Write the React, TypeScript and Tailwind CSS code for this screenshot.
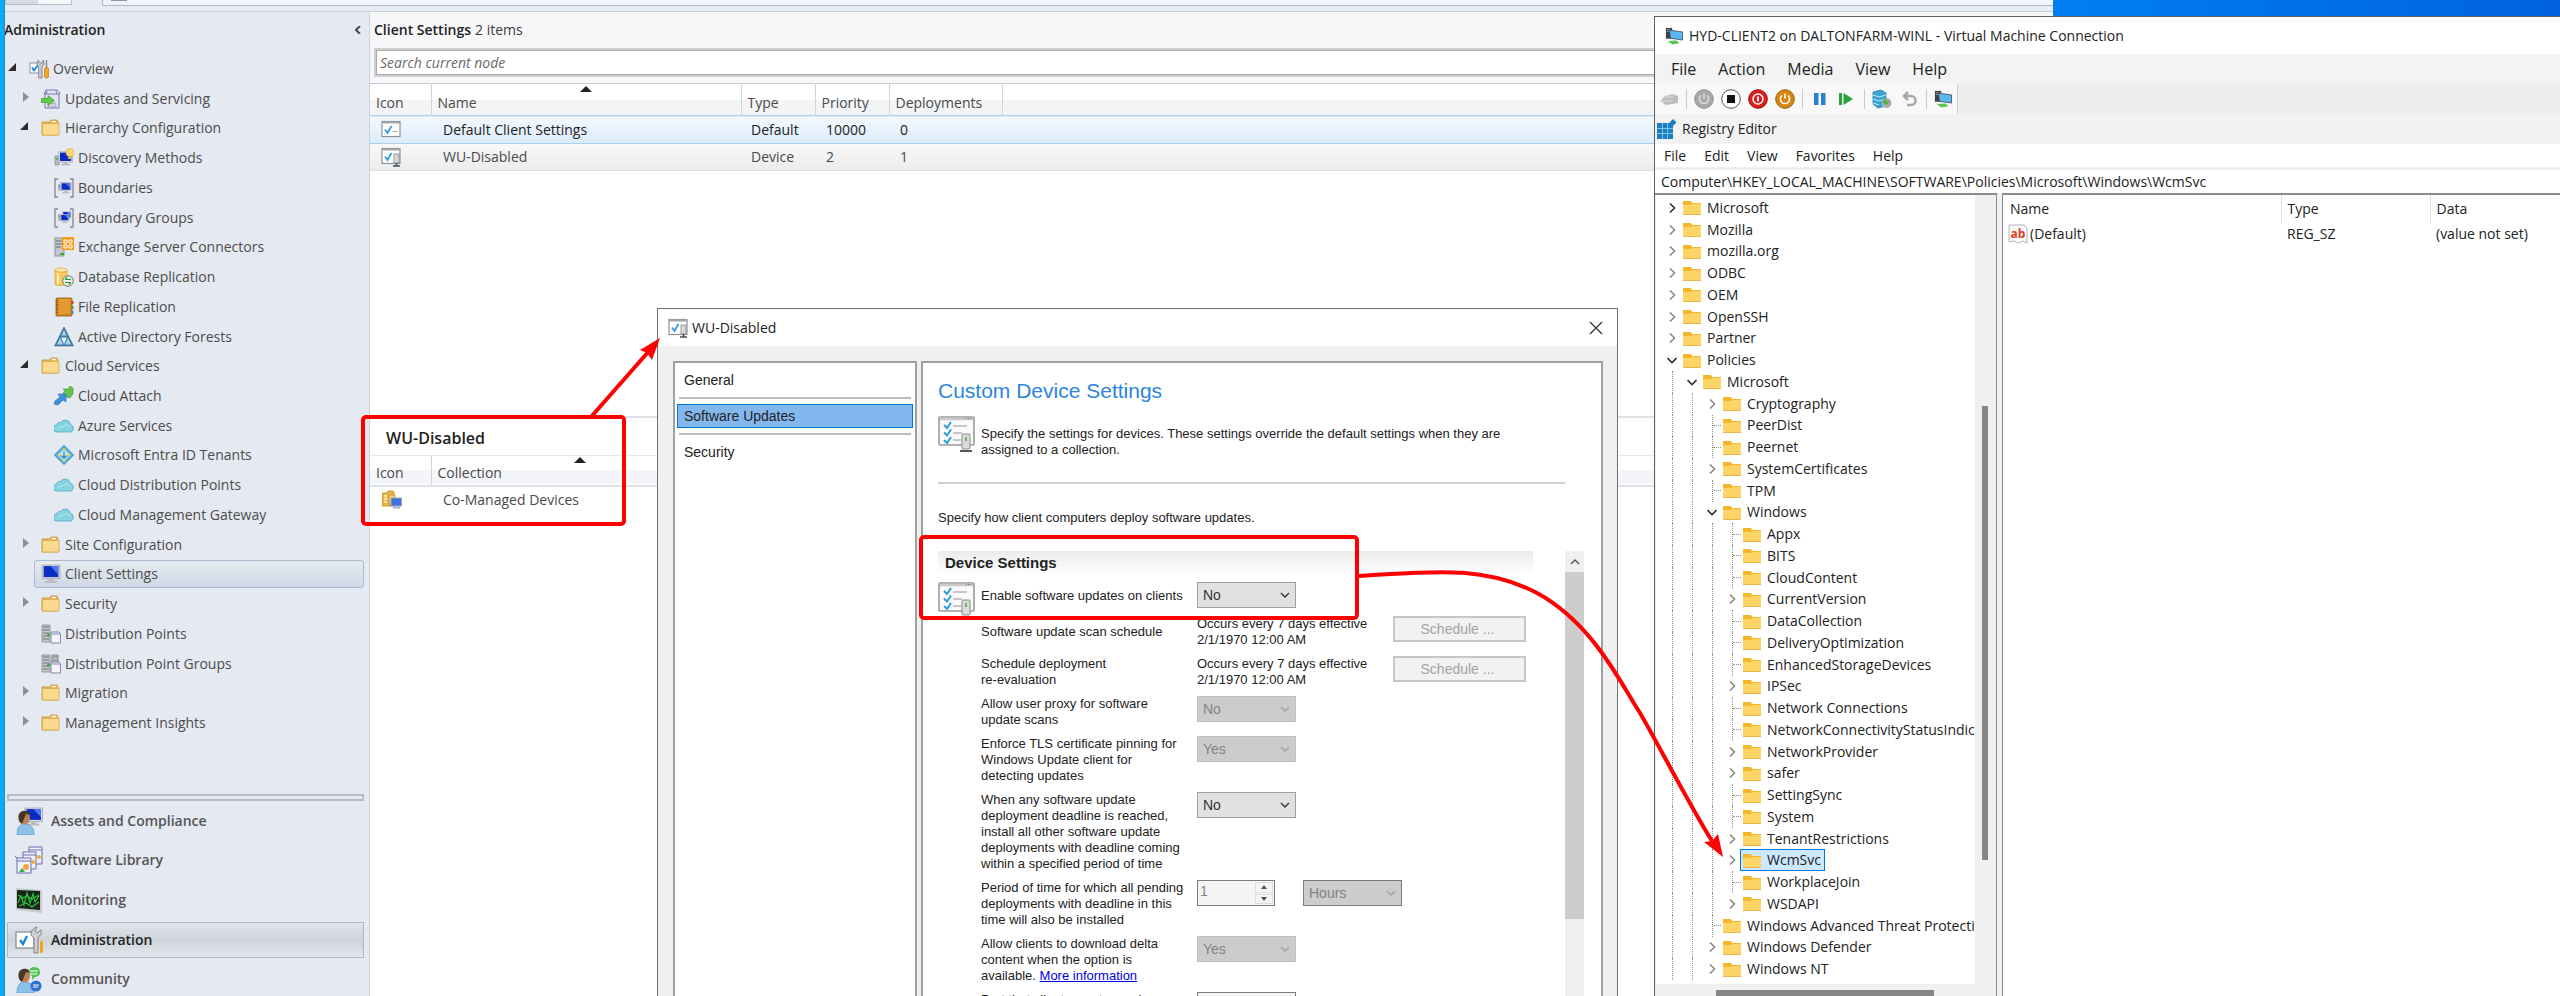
import type { ReactNode } from "react";
import clsx from "clsx";

const SEGOE = "font-['Open_Sans',sans-serif]";
const MS_SANS = "font-['Liberation_Sans',Arial,sans-serif]";

type NavNode = { label: string; icon: ReactNode; level: 0 | 1 | 2; state?: "open" | "closed"; selected?: boolean };

function Icon({ children, className = "size-5" }: { children: ReactNode; className?: string }) {
  return (
    <svg viewBox="0 0 20 20" aria-hidden="true" className={clsx("block shrink-0", className)}>
      {children}
    </svg>
  );
}

function Tools() {
  return (
    <Icon>
      <rect x="1" y="4" width="10" height="10" fill="#fff" stroke="#8c8f96" />
      <path d="M3 8.500l2 3 4-5.500" fill="none" stroke="#1b84d8" strokeWidth="1.800" />
      <path d="M9 1l2 3h2l1-3 1.500 4-2.500 3v11H9.500V8L8 5z" fill="#c3c6cb" stroke="#7d8086" strokeWidth=".8" />
      <path d="M17.500 1v8" stroke="#8d9096" strokeWidth="1.500" />
      <rect x="15.500" y="8.500" width="4" height="10.500" rx="1.500" fill="#f3a51c" stroke="#b87410" strokeWidth=".6" />
    </Icon>
  );
}

function UpdateBox() {
  return (
    <Icon>
      <path d="M3 5l2-4h11l3 3-1 2v13H4V5z" fill="#e4e6f4" stroke="#7677ad" />
      <path d="M4 5h14M6 2l-1 3M15 2l1 3" stroke="#7677ad" />
      <path d="M7 14h8v4H7z" fill="#cdd0e6" stroke="#9193bb" strokeWidth=".6" />
      <path d="M0 9.500h7V6.500l6.500 5L7 16.500v-3H0z" fill="#63cb48" stroke="#3c9f28" strokeWidth=".7" />
    </Icon>
  );
}

function FolderTan() {
  return (
    <Icon>
      <path d="M1 4h8l1-2h6l1 2v13H1z" fill="#edbb5e" stroke="#c48f33" strokeWidth=".8" />
      <path d="M11 3.500h4" stroke="#fff" strokeWidth="1.200" />
      <path d="M1.500 5.500h16.500v11.500H1.500z" fill="#fbd98e" stroke="#d9a84c" strokeWidth=".8" />
    </Icon>
  );
}

function Monitor({ x = 0, y = 0, s = 1 }: { x?: number; y?: number; s?: number }) {
  return (
    <g transform={`translate(${x} ${y}) scale(${s})`}>
      <rect x="1" y="1" width="17" height="13" fill="#d9dbe0" stroke="#a5a8af" strokeWidth=".8" />
      <rect x="2.500" y="2" width="14" height="10.500" fill="#0b2bc4" />
      <path d="M9 2h7.500v8z" fill="#4d78f0" />
      <path d="M7 14h5v2h3v2H4v-2h3z" fill="#b9bcc2" />
    </g>
  );
}

function Discovery() {
  return (
    <Icon>
      <path d="M1 8h4v9H1z" fill="#b8bbc1" stroke="#85888e" strokeWidth=".7" />
      <circle cx="3" cy="11" r="1" fill="#38b838" />
      <Monitor x={4} y={3} s={0.8} />
      <circle cx="16" cy="4.500" r="4" fill="#ffd978" stroke="#e3ad3b" strokeWidth=".7" />
      <path d="M14 8h3v3h-3z" fill="#d7ab53" />
    </Icon>
  );
}

function Bracketed({ group = false }: { group?: boolean }) {
  return (
    <Icon>
      <path d="M4 1H1v18h3M16 1h3v18h-3" fill="none" stroke="#85888e" strokeWidth="1.300" />
      <path d="M4 6h3v7H4z" fill="#b8bbc1" />
      <circle cx="5.500" cy="8.500" r="1" fill="#38b838" />
      {group && <Monitor x={8} y={3} s={0.5} />}
      <Monitor x={6} y={group ? 6 : 4} s={group ? 0.5 : 0.62} />
    </Icon>
  );
}

function Exchange() {
  return (
    <Icon>
      <rect x="1" y="1" width="9" height="18" fill="#c5c8ce" stroke="#7d8087" strokeWidth=".8" />
      <path d="M2 4h7M2 7h7M2 10h5" stroke="#6a6d74" />
      <path d="M6 17h4" stroke="#2faf2f" strokeWidth="2" />
      <rect x="8" y="0" width="12" height="13" fill="#f49b1b" />
      <path d="M10 3h3v3h-3zM15 3h3v3h-3zM10 8h3v3h-3zM15 8h3v3h-3z" fill="none" stroke="#fff" strokeWidth="1" />
    </Icon>
  );
}

function DatabaseIcon() {
  return (
    <Icon>
      <path d="M1 3v14c0 2 12 2 12 0V3z" fill="#f8c95b" stroke="#d7a02f" strokeWidth=".7" />
      <ellipse cx="7" cy="3" rx="6" ry="2" fill="#fde9ae" stroke="#d7a02f" strokeWidth=".7" />
      <path d="M4 6v11" stroke="#fdedc0" strokeWidth="2" />
      <circle cx="14" cy="14" r="5.300" fill="#e7efe7" stroke="#6f7a70" />
      <path d="M11 12.500h6M11 15.500h6M13 10.500l-2 2M15 17.500l2-2" stroke="#249f33" strokeWidth="1.200" />
    </Icon>
  );
}

function Book() {
  return (
    <Icon>
      <rect x="2" y="1" width="16" height="18" rx="1" fill="#d98a1d" stroke="#8d5910" strokeWidth=".8" />
      <rect x="5" y="2" width="11" height="15" fill="#e39a33" />
      <path d="M3 3v14" stroke="#744a10" strokeDasharray="1 1" strokeWidth="1.500" />
      <path d="M18.500 4v3" stroke="#d33" strokeWidth="1.800" />
      <path d="M18.500 9v3" stroke="#3a9b3a" strokeWidth="1.800" />
      <path d="M18.500 14v3" stroke="#377fd0" strokeWidth="1.800" />
    </Icon>
  );
}

function Forest() {
  return (
    <Icon>
      <path d="M10 0l9.500 19H.5z" fill="#3f7fa9" stroke="#2f668c" strokeWidth=".6" />
      <path d="M10 3l2.500 5.500h-5zM6 11l3 6.500H3zM14 11l3 6.500h-6z" fill="#a9d3ea" />
      <path d="M10 17l-3-6.500h6z" fill="#e8f4fb" />
    </Icon>
  );
}

function Attach() {
  return (
    <Icon>
      <path d="M9 7l2-2-2-2 5 0 2-3 3 2v6l-3 4-3-1-3 1z" fill="#62c24d" stroke="#41a02f" strokeWidth=".6" />
      <path d="M4 8h8v8l-3-2-5 5-4-1 1-3 5-4z" fill="#3b93e0" stroke="#2670b4" strokeWidth=".6" />
    </Icon>
  );
}

function CloudIcon() {
  return (
    <Icon>
      <path
        d="M3 16a3.500 3.500 0 0 1-.5-7C3 7 5 6 6.500 6.500a5.500 5.500 0 0 1 10 2 4 4 0 0 1 .5 7.500z"
        fill="#83d3e0"
        stroke="#52acc0"
        strokeWidth=".8"
      />
      <path d="M4 13c2-3 5-1 7-4 2-1 4 0 5 2" fill="none" stroke="#b9e9f0" />
    </Icon>
  );
}

function Entra() {
  return (
    <Icon>
      <path d="M10 .5L19.500 10 10 19.500.5 10z" fill="#57b7e6" stroke="#2b88bd" />
      <path d="M10 4l6 6-6 6-6-6z" fill="#bfe8fa" />
      <path d="M10 5v10M6 10l4 3 4-3" fill="none" stroke="#2584bb" strokeWidth="1.200" />
      <circle cx="10" cy="5" r="1.500" fill="#f7dc47" />
      <circle cx="5.500" cy="10" r="1.500" fill="#f7dc47" />
      <circle cx="14.500" cy="10" r="1.500" fill="#f7dc47" />
      <circle cx="10" cy="15" r="1.500" fill="#f7dc47" />
    </Icon>
  );
}

function ServerDoc({ group = false }: { group?: boolean }) {
  return (
    <Icon>
      <path d="M1 1h8v17H1z" fill="#c6cacf" stroke="#85888e" strokeWidth=".8" />
      <path d="M2 3h6M2 6h6M2 9h6M2 12h6M2 15h6" stroke="#5f6268" strokeWidth=".9" />
      {group && <path d="M11 1h6v7h-6zM11 3h6M11 6h6" fill="#c6cacf" stroke="#6f7278" strokeWidth=".8" />}
      <circle cx="7.500" cy="11" r="1.400" fill="#2faf2f" />
      <path d="M10 8h8l1.500 2v9H10z" fill="#f3f5fb" stroke="#8387a8" />
      <path d="M10 10h9" stroke="#8387a8" />
    </Icon>
  );
}

function SettingsCheck({ device = false }: { device?: boolean }) {
  return (
    <Icon>
      <rect x="1" y="1.500" width="18" height="15" fill="#fff" stroke="#8e9196" strokeWidth="1.200" />
      <path d="M1 2.500h18" stroke="#a2a5aa" strokeWidth="2" />
      <path d="M4 9.500l2.500 3.500L10.500 6" fill="none" stroke="#3a9fe0" strokeWidth="1.900" />
      {device ? (
        <>
          <rect x="13" y="7" width="5" height="9" fill="#d6d8da" stroke="#85888c" strokeWidth=".8" />
          <path d="M12 19h7M15.500 16v3" stroke="#4a4c50" strokeWidth="1.600" />
        </>
      ) : (
        <path d="M11.500 11.500h5" stroke="#a2a5aa" />
      )}
    </Icon>
  );
}

function ChecklistIcon() {
  return (
    <svg viewBox="0 0 38 36" aria-hidden="true" className="h-9 w-[38px] shrink-0">
      <rect x="1" y="1" width="35" height="28" rx="1" fill="#fafafa" stroke="#9b9b9b" strokeWidth="1.600" />
      <path d="M2 3h33" stroke="#c9c9c9" strokeWidth="2.500" />
      <path d="M28 2.500h6" stroke="#777" strokeDasharray="1 1" />
      <path d="M6 9l3 3 4-6M6 16.500l3 3 4-6M6 24l3 3 4-6" fill="none" stroke="#2f9bdc" strokeWidth="2" />
      <path d="M15 10h14M15 17h9M15 24h8" stroke="#b5b5b5" strokeWidth="1.500" />
      <rect x="24" y="18" width="8" height="15" rx="1" fill="#dcdcdc" stroke="#8b8b8b" />
      <path d="M28 21v4" stroke="#59b340" strokeWidth="1.800" />
      <path d="M22 35h12" stroke="#444" strokeWidth="1.800" />
    </svg>
  );
}

const nav: NavNode[] = [
  { label: "Overview", icon: <Tools />, level: 0, state: "open" },
  { label: "Updates and Servicing", icon: <UpdateBox />, level: 1, state: "closed" },
  { label: "Hierarchy Configuration", icon: <FolderTan />, level: 1, state: "open" },
  { label: "Discovery Methods", icon: <Discovery />, level: 2 },
  { label: "Boundaries", icon: <Bracketed />, level: 2 },
  { label: "Boundary Groups", icon: <Bracketed group />, level: 2 },
  { label: "Exchange Server Connectors", icon: <Exchange />, level: 2 },
  { label: "Database Replication", icon: <DatabaseIcon />, level: 2 },
  { label: "File Replication", icon: <Book />, level: 2 },
  { label: "Active Directory Forests", icon: <Forest />, level: 2 },
  { label: "Cloud Services", icon: <FolderTan />, level: 1, state: "open" },
  { label: "Cloud Attach", icon: <Attach />, level: 2 },
  { label: "Azure Services", icon: <CloudIcon />, level: 2 },
  { label: "Microsoft Entra ID Tenants", icon: <Entra />, level: 2 },
  { label: "Cloud Distribution Points", icon: <CloudIcon />, level: 2 },
  { label: "Cloud Management Gateway", icon: <CloudIcon />, level: 2 },
  { label: "Site Configuration", icon: <FolderTan />, level: 1, state: "closed" },
  { label: "Client Settings", icon: <Icon><Monitor s={1.05} /></Icon>, level: 1, selected: true },
  { label: "Security", icon: <FolderTan />, level: 1, state: "closed" },
  { label: "Distribution Points", icon: <ServerDoc />, level: 1 },
  { label: "Distribution Point Groups", icon: <ServerDoc group />, level: 1 },
  { label: "Migration", icon: <FolderTan />, level: 1, state: "closed" },
  { label: "Management Insights", icon: <FolderTan />, level: 1, state: "closed" },
];

const levelPad = { 0: "pl-[3px]", 1: "pl-[15px]", 2: "pl-7" };

function NavTree() {
  return (
    <nav aria-label="Administration" className="grid h-[684px] shrink-0 auto-rows-fr">
      {nav.map((n) => (
        <a key={n.label} href="#" className={clsx("flex items-center", levelPad[n.level])}>
          <span className="flex w-[14px] shrink-0 items-center">
            {n.state === "open" && (
              <svg viewBox="0 0 8 8" className="-mt-1 size-2"><path d="M8 0v8H0z" fill="#2b2b2b" /></svg>
            )}
            {n.state === "closed" && (
              <svg viewBox="0 0 6 10" className="-mt-1 ml-[3px] h-[10px] w-[6px]"><path d="M0 0l6 5-6 5z" fill="#8d8f94" /></svg>
            )}
          </span>
          <span
            className={clsx(
              "flex h-7 flex-1 items-center gap-1 border pl-[6px]",
              n.selected
                ? "mr-[5px] rounded-[3px] border-[#a9b9cf] bg-linear-to-b from-[#e6ebf2] to-[#cfd8e4]"
                : "border-transparent",
            )}
          >
            {n.icon}
            {n.label}
          </span>
        </a>
      ))}
    </nav>
  );
}

function Person() {
  return (
    <>
      <path d="M2 28c0-8 3-11 8-11s9 3 9 11z" fill="#8cc1ea" stroke="#5c94c4" strokeWidth=".7" />
      <ellipse cx="10" cy="11" rx="5" ry="6.500" fill="#b9835a" />
      <path d="M3.500 11c-1-9 11-9 11.500-3l-4-1-2 5-2 5c-2-1-3.500-3-3.500-6z" fill="#4a3626" />
    </>
  );
}

function BigIcon({ children }: { children: ReactNode }) {
  return <svg viewBox="0 0 28 28" aria-hidden="true" className="size-7 shrink-0">{children}</svg>;
}

const workspaces = [
  { label: "Assets and Compliance", icon: <BigIcon><Monitor x={9} y={0} s={1.03} /><Person /></BigIcon> },
  {
    label: "Software Library",
    icon: (
      <BigIcon>
        <g fill="#eef0fa" stroke="#6a6fae">
          <path d="M14 1h13v17H14zM14 4h13" />
          <path d="M8 6h13v17H8zM8 9h13" />
          <path d="M2 12h14v15H2zM2 15h14M0 10l2 2" />
        </g>
        <circle cx="24" cy="11" r="2" fill="#f3a73b" />
        <circle cx="18" cy="16" r="2" fill="#f3a73b" />
        <circle cx="11" cy="21" r="3" fill="#f3a73b" />
        <path d="M4 26l3-4 3 4z" fill="#35a944" />
      </BigIcon>
    ),
  },
  {
    label: "Monitoring",
    icon: (
      <BigIcon>
        <path d="M1 2l26 2v23L1 24z" fill="#c8cacc" />
        <path d="M2 4l23 1v19L2 22z" fill="#17251b" />
        <path d="M3 17l3-7 3 9 3-12 3 10 3-9 2 8 4-6M3 9l5 3 4-2 5 3 7-4M4 20l7-3 6 4 7-5" fill="none" stroke="#2fbf3b" strokeWidth="1.200" />
      </BigIcon>
    ),
  },
  {
    label: "Administration",
    selected: true,
    icon: (
      <BigIcon>
        <rect x="1" y="6" width="18" height="16" fill="#fff" stroke="#8b8e92" strokeWidth="1.300" />
        <path d="M5 14l3 4 4-8" fill="none" stroke="#1b84d8" strokeWidth="2.400" />
        <path d="M16 9c0-4 2-7 6-8l-2 4 2 2 4-3c1 4-1 6-3 7v16h-4V12z" fill="#cfd1d3" stroke="#77797d" strokeWidth=".9" />
        <rect x="25" y="15" width="3" height="12" rx="1" fill="#f3a51c" />
      </BigIcon>
    ),
  },
  {
    label: "Community",
    icon: (
      <BigIcon>
        <Person />
        <path d="M19 2c8 0 8 10 1 10l-3 3v-4c-5-3-3-9 2-9z" fill="#52c458" />
        <path d="M15 6h8M15 9h7" stroke="#fff" />
        <circle cx="21" cy="21" r="5.500" fill="#2b6fd0" />
        <path d="M18 20h6M18 22h5" stroke="#fff" />
      </BigIcon>
    ),
  },
];

function SortMark({ className }: { className: string }) {
  return (
    <svg viewBox="0 0 12 6" aria-hidden="true" className={clsx("absolute h-[6px] w-3", className)}>
      <path d="M6 0l6 6H0z" fill="#222" />
    </svg>
  );
}

const headCell = "border-r border-[#d2d4d8] pl-[6px] text-left font-normal";

function ConsolePane() {
  return (
    <main className="flex min-w-0 flex-1 flex-col bg-white text-[#4a4a4a]">
      <div className="flex h-[71px] flex-col bg-[#f7f7fa] pl-1">
        <h2 className="flex h-9 items-center gap-1 text-[#3a3a3a]">
          <b className="font-semibold text-[#222]">Client Settings</b> 2 items
        </h2>
        <input
          type="text"
          aria-label="Search current node"
          placeholder="Search current node"
          className="h-[29px] w-full border-2 border-[#cfcfcf] bg-white px-1 italic outline-1 -outline-offset-3 outline-[#a9a9a9] placeholder:text-[#6b6b6b]"
        />
      </div>
      <table className="w-full table-fixed border-t border-[#c9cbcf]">
        <colgroup>
          <col className="w-[61px]" />
          <col className="w-[310px]" />
          <col className="w-[74px]" />
          <col className="w-[74px]" />
          <col className="w-[113px]" />
          <col />
        </colgroup>
        <thead className="bg-linear-to-b from-white from-50% to-[#f3f4f6] to-50%">
          <tr className="h-8">
            <th className={clsx(headCell, "pt-[7px]")}>Icon</th>
            <th className={clsx(headCell, "relative pt-[7px]")}>
              Name
              <SortMark className="top-[2px] left-[148px]" />
            </th>
            <th className={clsx(headCell, "pt-[7px]")}>Type</th>
            <th className={clsx(headCell, "pt-[7px]")}>Priority</th>
            <th className={clsx(headCell, "pt-[7px]")}>Deployments</th>
            <th />
          </tr>
        </thead>
        <tbody>
          <tr className="h-[28px] border-y border-[#a9d0f0] bg-linear-to-b from-[#f3f9ff] to-[#dcebfa] text-[#222]">
            <td className="pl-[11px]"><SettingsCheck /></td>
            <td className="pl-3">Default Client Settings</td>
            <td className="pl-[10px]">Default</td>
            <td className="pl-[11px]">10000</td>
            <td className="pl-[11px]">0</td>
            <td />
          </tr>
          <tr className="h-[27px] border-b border-[#dcdcdc] bg-linear-to-b from-[#f9f9f9] to-[#ececec]">
            <td className="pl-[11px]"><SettingsCheck device /></td>
            <td className="pl-3">WU-Disabled</td>
            <td className="pl-[10px]">Device</td>
            <td className="pl-[11px]">2</td>
            <td className="pl-[11px]">1</td>
            <td />
          </tr>
        </tbody>
      </table>
      <section className="mt-[245px] flex-1 border-t-2 border-[#dfe1e6]">
        <h3 className="flex h-[37px] items-center pt-[2px] pl-4 text-base font-semibold text-[#222]">WU-Disabled</h3>
        <table className="w-full table-fixed border-t border-[#e6e8eb]">
          <colgroup>
            <col className="w-[61px]" />
            <col />
          </colgroup>
          <thead className="border-b-2 border-[#dfe1e4] bg-linear-to-b from-white from-50% to-[#f3f5f8] to-50%">
            <tr className="h-[30px]">
              <th className={clsx(headCell, "pt-[5px]")}>Icon</th>
              <th className={clsx(headCell, "relative pt-[5px]")}>
                Collection
                <SortMark className="top-px left-[142px]" />
              </th>
            </tr>
          </thead>
          <tbody>
            <tr className="h-[28px]">
              <td className="pl-3">
                <Icon>
                  <path d="M0 3h5l1-2h5l1 2v13H0z" fill="#e9b448" stroke="#b98720" strokeWidth=".8" />
                  <path d="M2 6h3M7 6h3M2 9h3M2 12h3" stroke="#fff1c5" strokeWidth="1.500" />
                  <rect x="7" y="5" width="6" height="9" fill="#f3cf7d" stroke="#b98720" strokeWidth=".7" />
                  <rect x="9" y="8" width="10.500" height="8" fill="#3d74e0" stroke="#9fa6b4" />
                  <path d="M11 18.500h7v-2h-7z" fill="#9fb3cf" />
                </Icon>
              </td>
              <td className="pl-3">Co-Managed Devices</td>
            </tr>
          </tbody>
        </table>
      </section>
    </main>
  );
}

function ConsoleWindow() {
  return (
    <div className="absolute inset-y-0 left-1 flex w-[2049px] flex-col overflow-hidden border-l border-[#3f7fae] bg-[#e5e9f1]">
      <div className="flex h-3 shrink-0 items-start gap-[30px] border-b border-[#c3ccda] bg-[#e7ebf3]">
        <div className="flex h-[5px] w-[67px] border border-t-0 border-[#b7becb]">
          <span className="w-8 bg-[#d5dbe6]" />
          <span className="flex-1 bg-[#f4f6fa]" />
        </div>
        <div className="flex h-[6px] flex-1 border border-t-0 border-r-0 border-[#b0b8c6] bg-[#f0f3f8] pl-2">
          <span className="h-px w-4 bg-[#8d939e]" />
        </div>
      </div>
      <div className="flex min-h-0 flex-1">
        <aside className="flex w-[365px] shrink-0 flex-col border-r border-[#c5d3e3] text-[#4c4c4c]">
          <div className="mb-[6px] flex h-9 shrink-0 items-center justify-between pr-2">
            <h1 className="-ml-px font-semibold text-[#222]">Administration</h1>
            <button type="button" aria-label="Collapse">
              <svg viewBox="0 0 6 8" className="h-2 w-[6px]"><path d="M5 0L1 4l4 4" fill="none" stroke="#4a4a4a" strokeWidth="2" /></svg>
            </button>
          </div>
          <NavTree />
          <div className="mt-14 ml-[2px] h-[7px] w-[357px] shrink-0 border-2 border-[#b5bbc4] bg-[#e6eaee]" />
          <div className="grid h-[198px] shrink-0 auto-rows-fr">
            {workspaces.map((w) => (
              <button key={w.label} type="button" className="flex items-center pl-[2px] font-semibold">
                <span
                  className={clsx(
                    "flex h-9 w-[357px] items-center gap-2 border pl-[7px]",
                    w.selected
                      ? "border-[#a9b8c9] bg-linear-to-b from-[#e1e6ed] via-[#ced3da] to-[#e3e8ee] text-[#222]"
                      : "border-transparent text-[#555]",
                  )}
                >
                  {w.icon}
                  {w.label}
                </span>
              </button>
            ))}
          </div>
        </aside>
        <ConsolePane />
      </div>
    </div>
  );
}

function Chevron({ className }: { className?: string }) {
  return (
    <svg viewBox="0 0 10 6" aria-hidden="true" className={clsx("h-[6px] w-[10px]", className)}>
      <path d="M1 1l4 4 4-4" fill="none" stroke="currentColor" strokeWidth="1.400" />
    </svg>
  );
}

function Combo({ label, value, disabled, dark }: { label: string; value: string; disabled?: boolean; dark?: boolean }) {
  return (
    <span className={clsx("relative block h-[26px] w-[99px]", disabled ? "text-[#838383]" : "text-[#333]")}>
      <select
        aria-label={label}
        disabled={disabled}
        className={clsx(
          "size-full appearance-none border px-[5px] text-sm opacity-100",
          disabled ? "bg-[#cccccc]" : "bg-[#e1e1e1]",
          dark ? "border-[#7a7a7a]" : disabled ? "border-[#bfbfbf]" : "border-[#a0a0a0]",
        )}
      >
        <option>{value}</option>
      </select>
      <Chevron className={clsx("pointer-events-none absolute top-[10px] right-[6px]", disabled && "text-[#a3a3a3]")} />
    </span>
  );
}

function ScheduleValue() {
  return <p className="w-[196px] whitespace-pre-line">{"Occurs every 7 days effective\n2/1/1970 12:00 AM"}</p>;
}

function ScheduleButton() {
  return (
    <button type="button" disabled className="h-[26px] w-[133px] border-2 border-[#c6c6c6] bg-[#f2f2f2] pr-1 text-sm text-[#a3a3a3]">
      Schedule ...
    </button>
  );
}

function SettingRow({ label, children }: { label: ReactNode; children: ReactNode }) {
  return (
    <div className="flex pb-2 pl-[43px]">
      <div className="w-[216px] whitespace-pre-line">{label}</div>
      {children}
    </div>
  );
}

const dialogTabs = ["General", "Software Updates", "Security"];

function SettingsDialog() {
  return (
    <div role="dialog" aria-label="WU-Disabled" className="absolute top-[308px] bottom-0 left-[657px] flex w-[961px] flex-col border border-b-0 border-[#707070] bg-[#f0f0f0] text-[#222]">
      <div className="flex h-[37px] shrink-0 items-center gap-1 bg-white pr-[14px] pl-[10px]">
        <SettingsCheck device />
        <span className="flex-1">WU-Disabled</span>
        <button type="button" aria-label="Close">
          <svg viewBox="0 0 14 14" className="size-[14px]"><path d="M1 1l12 12M13 1L1 13" stroke="#333" strokeWidth="1.300" /></svg>
        </button>
      </div>
      <div className={clsx("flex min-h-0 flex-1 gap-1 pt-[15px] pr-[14px] pl-[15px]", MS_SANS)}>
        <div className="w-[244px] shrink-0 border-2 border-b-0 border-[#a0a0a0] bg-white px-[2px] pt-[5px]">
          {dialogTabs.map((t, i) => (
            <div key={t}>
              <button
                type="button"
                className={clsx(
                  "flex h-6 w-full items-center border pl-[6px] text-sm",
                  i === 1 ? "border-[#0078d7] bg-[#83b8ee]" : "border-transparent",
                )}
              >
                {t}
              </button>
              {i < 2 && <hr className="mx-[2px] my-[5px] border-t-2 border-[#bdbdbd]" />}
            </div>
          ))}
        </div>
        <div className="flex min-w-0 flex-1 flex-col border-2 border-b-0 border-[#a0a0a0] bg-white pl-[15px] text-[13px] leading-4">
          <h2 className="mt-[14px] text-[21px] leading-7 text-[#2a86dc]">Custom Device Settings</h2>
          <div className="mt-[11px] flex gap-[5px]">
            <ChecklistIcon />
            <p className="mt-[10px] w-[560px]">
              Specify the settings for devices. These settings override the default settings when they are assigned to a collection.
            </p>
          </div>
          <hr className="mt-6 mr-9 border-t-2 border-[#d0d0d0]" />
          <p className="mt-[26px]">Specify how client computers deploy software updates.</p>
          <div className="mt-[25px] flex min-h-0 flex-1 gap-8 pr-[17px]">
            <div className="min-w-0 flex-1 overflow-hidden">
              <h3 className="flex h-6 items-center bg-linear-to-b from-[#ebebeb] to-white pl-[7px] text-[15px] font-bold">Device Settings</h3>
              <div className="mt-[7px] flex h-[34px] gap-[5px]">
                <ChecklistIcon />
                <div className="mt-[6px] w-[211px]">Enable software updates on clients</div>
                <Combo label="Enable software updates on clients" value="No" />
              </div>
              <div className="flex h-10 pl-[43px]">
                <div className="mt-2 w-[216px]">Software update scan schedule</div>
                <ScheduleValue />
                <ScheduleButton />
              </div>
              <SettingRow label={"Schedule deployment\nre-evaluation"}>
                <ScheduleValue />
                <ScheduleButton />
              </SettingRow>
              <SettingRow label={"Allow user proxy for software\nupdate scans"}>
                <Combo label="Allow user proxy for software update scans" value="No" disabled />
              </SettingRow>
              <SettingRow label={"Enforce TLS certificate pinning for\nWindows Update client for\ndetecting updates"}>
                <Combo label="Enforce TLS certificate pinning" value="Yes" disabled />
              </SettingRow>
              <SettingRow
                label={
                  "When any software update\ndeployment deadline is reached,\ninstall all other software update\ndeployments with deadline coming\nwithin a specified period of time"
                }
              >
                <Combo label="Install all other software update deployments" value="No" />
              </SettingRow>
              <SettingRow label={"Period of time for which all pending\ndeployments with deadline in this\ntime will also be installed"}>
                <span className="mr-7 flex h-[26px] w-[78px] border border-[#7a7a7a] bg-[#f4f4f4] p-px">
                  <input
                    aria-label="Period of time"
                    disabled
                    defaultValue="1"
                    className="min-w-0 flex-1 pb-1 pl-px text-sm text-[#838383]"
                  />
                  <span className="flex w-[18px] flex-col gap-px">
                    <button type="button" disabled aria-label="Increase" className="grid flex-1 place-items-center border border-[#ddd]">
                      <svg viewBox="0 0 6 4" className="h-1 w-[6px]"><path d="M3 0l3 4H0z" fill="#555" /></svg>
                    </button>
                    <button type="button" disabled aria-label="Decrease" className="grid flex-1 place-items-center border border-[#ddd]">
                      <svg viewBox="0 0 6 4" className="h-1 w-[6px]"><path d="M0 0h6L3 4z" fill="#555" /></svg>
                    </button>
                  </span>
                </span>
                <Combo label="Period unit" value="Hours" disabled dark />
              </SettingRow>
              <SettingRow
                label={
                  <>
                    <p>{"Allow clients to download delta\ncontent when the option is"}</p>
                    <p>
                      available. <a href="#" className="text-[#0000e6] underline">More information</a>
                    </p>
                  </>
                }
              >
                <Combo label="Allow clients to download delta content" value="Yes" disabled />
              </SettingRow>
              <SettingRow label={"Port that clients use to receive\nrequests for delta content"}>
                <input aria-label="Port" disabled defaultValue="8005" className="h-[26px] w-[99px] border border-[#7a7a7a] bg-[#f4f4f4] px-1 text-[#838383]" />
              </SettingRow>
            </div>
            <div className="w-[19px] shrink-0 bg-[#f0f0f0] text-[#555]">
              <div className="grid h-[21px] place-items-center"><Chevron className="rotate-180" /></div>
              <div className="h-[347px] bg-[#cdcdcd]" />
            </div>
          </div>
        </div>
      </div>
    </div>
  );
}

function VmIcon() {
  return (
    <Icon className="size-[18px]">
      <path d="M1 1h7v12H1z" fill="#3c4147" />
      <path d="M2 3h4M2 5h4" stroke="#9aa0a6" />
      <path d="M5 3.500l14.500 2v9L6 12.500z" fill="#58b8ee" stroke="#3b4a57" strokeWidth=".9" />
      <path d="M3 15.500l10-.5 3 3-8 1.500z" fill="#5ec552" />
    </Icon>
  );
}

function Round({ fill, stroke, children }: { fill: string; stroke: string; children: ReactNode }) {
  return (
    <Icon>
      <circle cx="10" cy="10" r="9.300" fill={fill} stroke={stroke} />
      {children}
    </Icon>
  );
}

const power = "M7 6.500a4.600 4.600 0 1 0 6 0M10 4.500v5";

type KeyNode = [label: string, level: 0 | 1 | 2 | 3, state?: "open" | "closed"];

const keys: KeyNode[] = [
  ["Microsoft", 0, "closed"],
  ["Mozilla", 0, "closed"],
  ["mozilla.org", 0, "closed"],
  ["ODBC", 0, "closed"],
  ["OEM", 0, "closed"],
  ["OpenSSH", 0, "closed"],
  ["Partner", 0, "closed"],
  ["Policies", 0, "open"],
  ["Microsoft", 1, "open"],
  ["Cryptography", 2, "closed"],
  ["PeerDist", 2],
  ["Peernet", 2],
  ["SystemCertificates", 2, "closed"],
  ["TPM", 2],
  ["Windows", 2, "open"],
  ["Appx", 3],
  ["BITS", 3],
  ["CloudContent", 3],
  ["CurrentVersion", 3, "closed"],
  ["DataCollection", 3],
  ["DeliveryOptimization", 3],
  ["EnhancedStorageDevices", 3],
  ["IPSec", 3, "closed"],
  ["Network Connections", 3],
  ["NetworkConnectivityStatusIndicator", 3],
  ["NetworkProvider", 3, "closed"],
  ["safer", 3, "closed"],
  ["SettingSync", 3],
  ["System", 3],
  ["TenantRestrictions", 3, "closed"],
  ["WcmSvc", 3, "closed"],
  ["WorkplaceJoin", 3],
  ["WSDAPI", 3, "closed"],
  ["Windows Advanced Threat Protection", 2],
  ["Windows Defender", 2, "closed"],
  ["Windows NT", 2, "closed"],
];

function FolderYellow() {
  return (
    <svg viewBox="0 0 18 15" aria-hidden="true" className="h-[15px] w-[18px] shrink-0">
      <path d="M0 1h8l1 2h9v12H0z" fill="#f5b62b" />
      <path d="M0 5h8l1-1h9v11H0z" fill="#fdd466" />
      <path d="M0 14.500h18" stroke="#e9b741" />
    </svg>
  );
}

function KeyTree() {
  return (
    <div className="grid h-[783px] auto-rows-fr pl-[6px]">
      {keys.map(([label, level, state], i) => (
        <div key={i} className="flex min-h-0 items-center whitespace-nowrap">
          {Array.from({ length: level }, (_, l) => (
            <span key={l} className="flex w-5 shrink-0 self-stretch pl-[10px]">
              <span className="border-l border-dotted border-[#8f8f8f]" />
            </span>
          ))}
          {state ? (
            <span className={clsx("grid w-5 shrink-0 place-items-center", state === "open" ? "text-[#333]" : "text-[#8a8a8a]", i === 0 && "text-[#333]")}>
              <svg viewBox="0 0 10 10" className={clsx("size-[10px]", state === "open" && "rotate-90")}>
                <path d="M3 0.500l4.500 4.500L3 9.500" fill="none" stroke="currentColor" strokeWidth="1.600" />
              </svg>
            </span>
          ) : (
            <span className="flex w-5 shrink-0 self-stretch pl-[10px]">
              <span className="flex flex-1 items-center border-l border-dotted border-[#8f8f8f] pr-[1px]">
                <span className="flex-1 border-t border-dotted border-[#8f8f8f]" />
              </span>
            </span>
          )}
          <button
            type="button"
            className={clsx(
              "-ml-[2px] flex h-[22px] items-center gap-[6px] border pr-[3px] pl-[2px]",
              label === "WcmSvc" ? "border-[#0078d7] bg-[#cce8ff]" : "border-transparent",
            )}
          >
            <FolderYellow />
            {label}
          </button>
        </div>
      ))}
    </div>
  );
}

function VmWindow() {
  return (
    <div className="absolute inset-y-0 top-4 right-0 left-[1654px] flex flex-col border-t border-l border-[#5c6066] bg-white text-[#222]">
      <div className="flex h-[37px] shrink-0 items-center gap-[6px] pl-[10px]">
        <VmIcon />
        HYD-CLIENT2 on DALTONFARM-WINL - Virtual Machine Connection
      </div>
      <div className="flex h-[30px] shrink-0 items-center gap-[22px] bg-[#f3f3f3] pl-4 text-base">
        {["File", "Action", "Media", "View", "Help"].map((m) => (
          <button key={m} type="button">{m}</button>
        ))}
      </div>
      <div className="flex h-[30px] shrink-0 bg-[#eeeeee]">
        <div className="flex w-[303px] items-center gap-[7px] border-r border-[#cfcfcf] bg-[#f8f8f8] pl-1">
          <Icon>
            <path d="M1 12l5-5 5-1 2-1 6 2v7l-6 1-6 1z" fill="#bdbdbd" />
            <path d="M6 8h8M2 12h10" stroke="#dedede" />
          </Icon>
          <span className="h-5 w-px bg-[#c9c9c9]" />
          <div className="flex gap-[7px]">
            <Round fill="#a9a9a9" stroke="#8e8e8e"><path d={power} fill="none" stroke="#dedede" strokeWidth="1.500" /></Round>
            <Round fill="#fff" stroke="#555"><rect x="6" y="6" width="8" height="8" fill="#111" /></Round>
            <Round fill="#e01b1b" stroke="#8f1010">
              <circle cx="10" cy="10" r="5" fill="none" stroke="#fff" strokeWidth="1.500" />
              <path d="M10 7.500v5" stroke="#fff" strokeWidth="1.800" />
            </Round>
            <Round fill="#d98512" stroke="#96600f"><path d={power} fill="none" stroke="#fff" strokeWidth="1.500" /></Round>
          </div>
          <span className="h-5 w-px bg-[#c9c9c9]" />
          <Icon><path d="M4 4h4.500v12H4zM11 4h4.500v12H11z" fill="#2b80d4" /></Icon>
          <Icon><path d="M2 4h3v12H2zM6.500 4L16 10l-9.500 6z" fill="#2ba13a" /></Icon>
          <span className="h-5 w-px bg-[#c9c9c9]" />
          <Icon>
            <path d="M1 3l8-2 5 3v13l-8 2-5-4z" fill="#35a6d6" stroke="#1f7299" strokeWidth=".7" />
            <path d="M1 6l6 2 7-2M1 10l6 2 7-2M1 14l6 2" fill="none" stroke="#c1e9f8" />
            <circle cx="14.500" cy="14" r="5" fill="#a9adab" />
            <path d="M10 13l4-4v3h4l-4 4z" fill="#4fb447" />
          </Icon>
          <Icon><path d="M5 7h7a4.500 4.500 0 0 1 0 9H8M9 3L5 7l4 4" fill="none" stroke="#a9a9a9" strokeWidth="2.500" /></Icon>
          <span className="h-5 w-px bg-[#c9c9c9]" />
          <VmIcon />
        </div>
      </div>
      <div className="flex h-[30px] shrink-0 items-center gap-[5px] bg-[#f2f2f2] pl-[2px]">
        <Icon>
          <path d="M0 4h16v16H0z" fill="#1b7fc4" />
          <path d="M0 9.500h16M0 14.500h16M5.500 4v16M10.500 4v16" stroke="#9bd3f3" strokeWidth=".8" />
          <path d="M16 0l3.500 3.500L16 7l-3.500-3.500z" fill="#1b7fc4" />
        </Icon>
        Registry Editor
      </div>
      <div className="flex h-[23px] shrink-0 items-center gap-[18px] pl-[9px]">
        {["File", "Edit", "View", "Favorites", "Help"].map((m) => (
          <button key={m} type="button">{m}</button>
        ))}
      </div>
      <input
        aria-label="Address"
        defaultValue="Computer\HKEY_LOCAL_MACHINE\SOFTWARE\Policies\Microsoft\Windows\WcmSvc"
        className="h-[26px] shrink-0 border-t-3 border-[#f0f0f0] px-[6px] outline-none"
      />
      <div className="flex min-h-0 flex-1 gap-[5px] bg-[#f0f0f0]">
        <div className="flex w-[342px] shrink-0 border-t-2 border-r border-[#868b92] bg-[#f0f0f0] pl-px">
          <div className="flex min-w-0 flex-1 flex-col overflow-hidden">
            <div className="bg-white pt-[2px] pb-1"><KeyTree /></div>
            <div className="h-4 pt-[6px] pl-[60px]"><div className="h-4 w-[218px] bg-[#868686]" /></div>
          </div>
          <div className="w-[21px] shrink-0 pt-[211px] pl-[7px]">
            <div className="h-[454px] w-[6px] bg-[#868686]" />
          </div>
        </div>
        <div className="min-w-0 flex-1 border-t-2 border-l border-[#868b92] bg-white">
          <table className="w-full table-fixed">
            <colgroup>
              <col className="w-[278px]" />
              <col className="w-[149px]" />
              <col />
            </colgroup>
            <thead>
              <tr className="h-[28px] text-left">
                <th className="border-r border-[#e2e2e2] pl-[7px] font-normal">Name</th>
                <th className="border-r border-[#e2e2e2] pl-[6px] font-normal">Type</th>
                <th className="pl-[6px] font-normal">Data</th>
              </tr>
            </thead>
            <tbody>
              <tr className="h-[22px]">
                <td className="pl-[5px]">
                  <span className="flex items-center gap-[2px]">
                    <span className="relative grid h-5 w-5 place-items-center">
                      <svg viewBox="0 0 20 20" aria-hidden="true" className="absolute inset-0">
                        <path d="M1 1h15l3 3v15l-4-2-4 2-5-2-5 1z" fill="#fafafa" stroke="#b5b5b5" />
                      </svg>
                      <b className="relative text-xs leading-3 text-[#dc3b22]">ab</b>
                    </span>
                    (Default)
                  </span>
                </td>
                <td className="pl-[6px]">REG_SZ</td>
                <td className="pl-[6px]">(value not set)</td>
              </tr>
            </tbody>
          </table>
        </div>
      </div>
    </div>
  );
}

// Red callouts that link the collection, the dialog and the registry key
function Callouts() {
  return (
    <svg viewBox="0 0 2560 996" aria-hidden="true" className="pointer-events-none absolute top-0 left-0 h-[996px] w-[2560px]">
      <g fill="none" stroke="#fe0000" strokeWidth="4">
        <rect x="363" y="417" width="261" height="107" rx="3" />
        <path d="M591 417L649 351" />
        <rect x="921" y="537" width="436" height="81" rx="3" />
        <path d="M1358 576C1420 573 1480 563 1537 593C1594 624 1622 686 1640 713C1656 740 1690 806 1712 841" />
      </g>
      <path d="M660 338L640 350 647 353 652 360z" fill="#fe0000" />
      <path d="M1723 857L1704 842 1712 841 1718 834z" fill="#fe0000" />
    </svg>
  );
}

export default function App() {
  return (
    <div className={clsx("relative h-screen overflow-hidden bg-linear-to-r from-[#00aeff] via-[#007ff0] via-80% to-[#0062dc] text-sm leading-5", SEGOE)}>
      <ConsoleWindow />
      <SettingsDialog />
      <VmWindow />
      <Callouts />
    </div>
  );
}
